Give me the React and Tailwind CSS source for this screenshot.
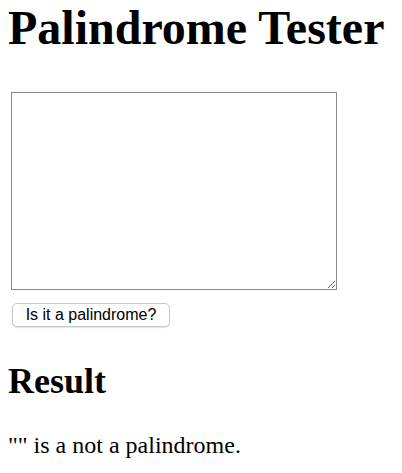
import React, { useState } from "react";

// Palindrome tester, plain document look
export default function App() {
  const [text, setText] = useState("");
  const [checked, setChecked] = useState("");

  const clean = checked.toLowerCase().replace(/[^a-z0-9]/g, "");
  const isPal = clean.length > 0 && clean === clean.split("").reverse().join("");

  return (
    <div
      className="bg-white text-black px-2 pb-4"
      style={{ fontFamily: "'Liberation Serif', 'Times New Roman', serif" }}
    >
      <h1 className="text-[48px] leading-[56px] font-bold m-0">Palindrome Tester</h1>

      <textarea
        value={text}
        onChange={(e) => setText(e.target.value)}
        className="block mt-[36px] ml-[3px] w-[326px] h-[198px] border border-[#8a8a8a] bg-white p-[2px] text-[16px] outline-none resize"
      />

      <button
        onClick={() => setChecked(text)}
        className="block mt-[13px] ml-[4px] w-[158px] h-[24px] rounded-[5px] border border-[#c9c9c9] bg-white text-[16px] leading-[20px] text-black shadow-[0_1px_1px_rgba(0,0,0,0.12)]"
        style={{ fontFamily: "'Liberation Sans', Arial, sans-serif" }}
      >
        Is it a palindrome?
      </button>

      <h2 className="mt-[33px] text-[36px] leading-[42px] font-bold">Result</h2>

      <p className="mt-[29px] text-[24px] leading-[28px]">
        "{checked}" is a {isPal ? "" : "not "}a palindrome.
      </p>
    </div>
  );
}
